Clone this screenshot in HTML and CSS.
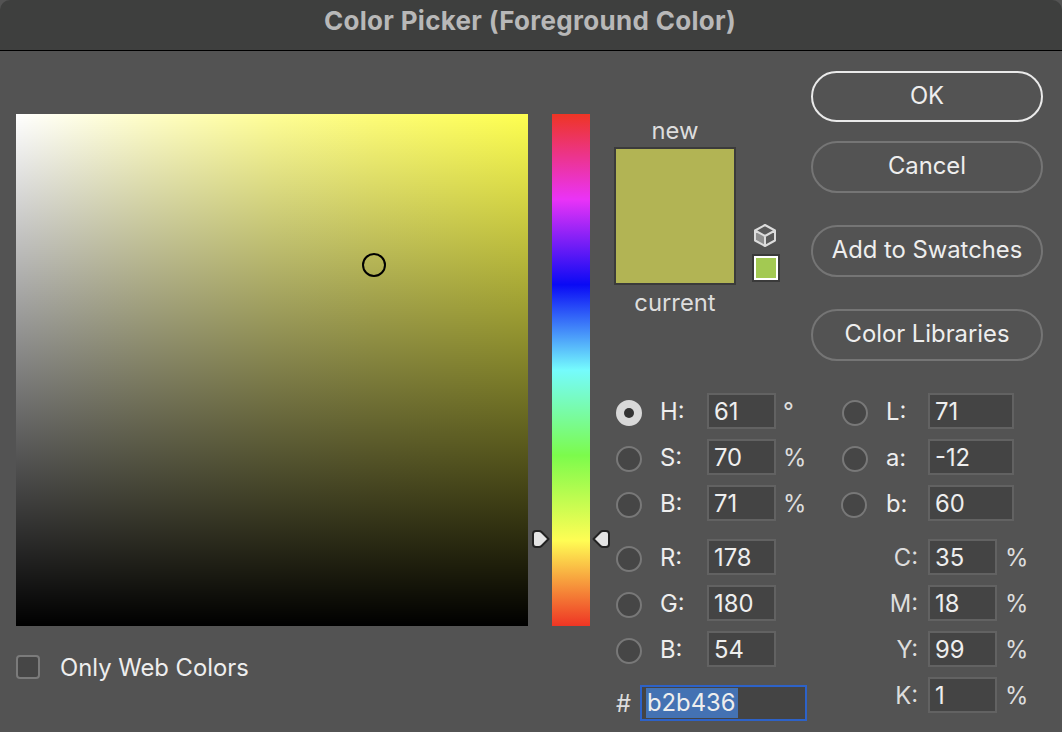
FILE: index.html
```html
<!DOCTYPE html>
<html>
<head>
  <meta charset="UTF-8">
  <title>Color Picker</title>
  <link rel="stylesheet" href="styles.css">
</head>
<body>
  <div class="dialog">
    <div class="titlebar">Color Picker (Foreground Color)</div>
    <div class="content">

      <div class="left">
        <div class="square">
          <div class="marker"></div>
        </div>
        <div class="only-web">
          <span class="checkbox"></span>
          <span>Only Web Colors</span>
        </div>
      </div>

      <div class="hue">
        <svg class="arrow arrow-left" width="18" height="18" viewBox="0 0 18 18">
          <path d="M4 1 H7 Q8.5 1 9.5 2 L16.5 9 L9.5 16 Q8.5 17 7 17 H4 Q1 17 1 14 V4 Q1 1 4 1 Z" fill="#e4e4e4" stroke="#222" stroke-width="2" stroke-linejoin="round"/>
        </svg>
        <svg class="arrow arrow-right" width="18" height="18" viewBox="0 0 18 18">
          <path d="M14 1 H11 Q9.5 1 8.5 2 L1.5 9 L8.5 16 Q9.5 17 11 17 H14 Q17 17 17 14 V4 Q17 1 14 1 Z" fill="#e4e4e4" stroke="#222" stroke-width="2" stroke-linejoin="round"/>
        </svg>
      </div>

      <div class="right">
        <div class="top">
          <div class="preview">
            <div class="preview-label">new</div>
            <div class="preview-box"></div>
            <div class="preview-label">current</div>
          </div>
          <div class="gamut">
            <svg width="24" height="25" viewBox="0 0 24 25">
              <path d="M12 2 L22 7.5 V17.5 L12 23 L2 17.5 V7.5 Z" fill="#5a5a5a"/>
              <path d="M2 7.5 L12 13 V23 L2 17.5 Z" fill="#8f8f8f"/>
              <path d="M12 2 L22 7.5 V17.5 L12 23 L2 17.5 V7.5 Z M2 7.5 L12 13 L22 7.5 M12 13 V23" fill="none" stroke="#dcdcdc" stroke-width="2" stroke-linejoin="round"/>
            </svg>
            <div class="websafe"></div>
          </div>
          <div class="buttons">
            <div class="btn btn-ok">OK</div>
            <div class="btn btn-cancel">Cancel</div>
            <div class="btn btn-swatches">Add to Swatches</div>
            <div class="btn btn-libraries">Color Libraries</div>
          </div>
        </div>

        <div class="values">
          <div class="col-hsb">
            <div class="group">
              <div class="row"><span class="radio selected"></span><span class="lbl">H:</span><span class="val">61</span><span class="unit">°</span></div>
              <div class="row"><span class="radio"></span><span class="lbl">S:</span><span class="val">70</span><span class="unit">%</span></div>
              <div class="row"><span class="radio"></span><span class="lbl">B:</span><span class="val">71</span><span class="unit">%</span></div>
            </div>
            <div class="group">
              <div class="row"><span class="radio"></span><span class="lbl">R:</span><span class="val">178</span></div>
              <div class="row"><span class="radio"></span><span class="lbl">G:</span><span class="val">180</span></div>
              <div class="row"><span class="radio"></span><span class="lbl">B:</span><span class="val">54</span></div>
            </div>
            <div class="row">
              <span class="hash">#</span>
              <span class="hex"><span class="hex-sel">b2b436</span></span>
            </div>
          </div>

          <div class="col-lab">
            <div class="group">
              <div class="row"><span class="radio"></span><span class="lbl lbl-lab">L:</span><span class="val val-wide">71</span></div>
              <div class="row"><span class="radio"></span><span class="lbl lbl-lab">a:</span><span class="val val-wide">-12</span></div>
              <div class="row"><span class="radio radio-b"></span><span class="lbl lbl-lab">b:</span><span class="val val-wide">60</span></div>
            </div>
            <div class="group">
              <div class="row"><span class="lbl lbl-cmyk">C:</span><span class="val">35</span><span class="unit unit-cmyk">%</span></div>
              <div class="row"><span class="lbl lbl-cmyk">M:</span><span class="val">18</span><span class="unit unit-cmyk">%</span></div>
              <div class="row"><span class="lbl lbl-cmyk">Y:</span><span class="val">99</span><span class="unit unit-cmyk">%</span></div>
              <div class="row"><span class="lbl lbl-cmyk">K:</span><span class="val">1</span><span class="unit unit-cmyk">%</span></div>
            </div>
          </div>
        </div>
      </div>

    </div>
  </div>
</body>
</html>
```

FILE: styles.css
```css
html, body { margin: 0; padding: 0; background: #535353; }
body { font-family: Inter, "Liberation Sans", sans-serif; font-size: 23.8px; color: #eee; }

.dialog { width: 1062px; height: 732px; overflow: hidden; background: #535353; }
.titlebar {
  height: 50px;
  line-height: 41px;
  background: #3e3f3e;
  border-bottom: 1px solid #000;
  border-radius: 10px 10px 0 0;
  color: #b8b8b8;
  font-size: 26px;
  font-weight: 700;
  letter-spacing: 0.3px;
  text-align: center;
  padding-right: 2px;
}
.content { display: flex; padding: 20px 0 0 16px; }

/* color field */
.left { width: 512px; margin-top: 43px; }
.square {
  position: relative;
  height: 512px;
  background:
    linear-gradient(to top, #000, rgba(0,0,0,0)),
    linear-gradient(to right, #fff 0%, #fffec8 25%, #fffe96 50%, #fefd77 70%, #feff50 100%);
}
.marker {
  position: absolute;
  left: 346px;
  top: 139px;
  width: 20px;
  height: 20px;
  border: 2px solid #000;
  border-radius: 50%;
}
.only-web { display: flex; align-items: center; margin-top: 29px; height: 24px; }
.checkbox {
  width: 20px;
  height: 20px;
  margin-right: 20px;
  background: #464646;
  border: 2px solid #7b7b7b;
  border-radius: 4px;
}

/* hue strip */
.hue {
  position: relative;
  width: 38px;
  height: 512px;
  margin: 43px 0 0 24px;
  background: linear-gradient(to bottom, #ee3524 0%, #ea33f7 16.67%, #0a0af5 33.33%, #75fbfd 50%, #7cfb4c 66.67%, #fffd54 83.33%, #ee3524 100%);
}
.arrow { position: absolute; top: 416px; }
.arrow-left { left: -20px; }
.arrow-right { right: -20px; }

.right { width: 429px; margin-left: 24px; }
.top { display: flex; height: 322px; }

/* new / current */
.preview { width: 122px; padding-top: 43px; }
.preview-label { height: 33px; line-height: 33px; text-align: center; color: #ddd; }
.preview-box {
  height: 134px;
  margin-bottom: 1px;
  background: #b2b454;
  border: 2px solid #3b3b3b;
}
.gamut { width: 75px; padding: 152px 0 0 18px; box-sizing: border-box; }
.gamut svg { display: block; margin-left: -1px; }
.websafe {
  width: 20px;
  height: 20px;
  margin-top: 8px;
  background: #a3c952;
  border: 2px solid #fff;
  outline: 2px solid #3a3a3a;
}

/* buttons */
.buttons { width: 232px; }
.btn {
  box-sizing: border-box;
  height: 52px;
  line-height: 45px;
  text-align: center;
  border: 2px solid #757575;
  border-radius: 26px;
}
.btn-ok { height: 51px; border-color: #eaeaea; }
.btn-cancel { margin-top: 19px; }
.btn-swatches { margin-top: 32px; }
.btn-libraries { margin-top: 32px; }

/* value fields */
.values { display: flex; }
.col-hsb { width: 228px; padding-left: 2px; box-sizing: border-box; display: flex; flex-direction: column; gap: 18px; }
.col-lab { display: flex; flex-direction: column; gap: 18px; }
.group { display: flex; flex-direction: column; gap: 10px; }
.row { display: flex; align-items: center; height: 36px; }
.radio {
  box-sizing: border-box;
  width: 26px;
  height: 26px;
  margin-top: 4px;
  background: #464646;
  border: 2px solid #787878;
  border-radius: 50%;
}
.radio-b { margin-left: -1px; margin-right: 1px; }
.radio.selected { background: #d8d8d8; border: 8px solid #d8d8d8; position: relative; }
.radio.selected::after {
  content: "";
  position: absolute;
  inset: 0;
  background: #333;
  border-radius: 50%;
}
.lbl { width: 47px; margin-left: 18px; color: #eee; }
.val {
  box-sizing: border-box;
  width: 69px;
  height: 36px;
  line-height: 33px;
  padding-left: 5px;
  background: #444;
  border: 2px solid #626262;
}
.val-wide { width: 86px; }
.unit { margin-left: 7px; color: #ddd; }
.lbl-lab { width: 42px; }
.lbl-cmyk { width: 76px; margin: 0 10px 0 0; text-align: right; color: #ddd; }
.unit-cmyk { margin-left: 8px; }

.hash { width: 24px; color: #ddd; }
.hex {
  box-sizing: border-box;
  width: 167px;
  height: 36px;
  padding: 1px 4px;
  background: #444;
  border: 2px solid #2d62c8;
}
.hex-sel { display: block; width: 91px; height: 30px; line-height: 30px; padding-left: 1px; background: #4472b3; color: #eee; }
```
